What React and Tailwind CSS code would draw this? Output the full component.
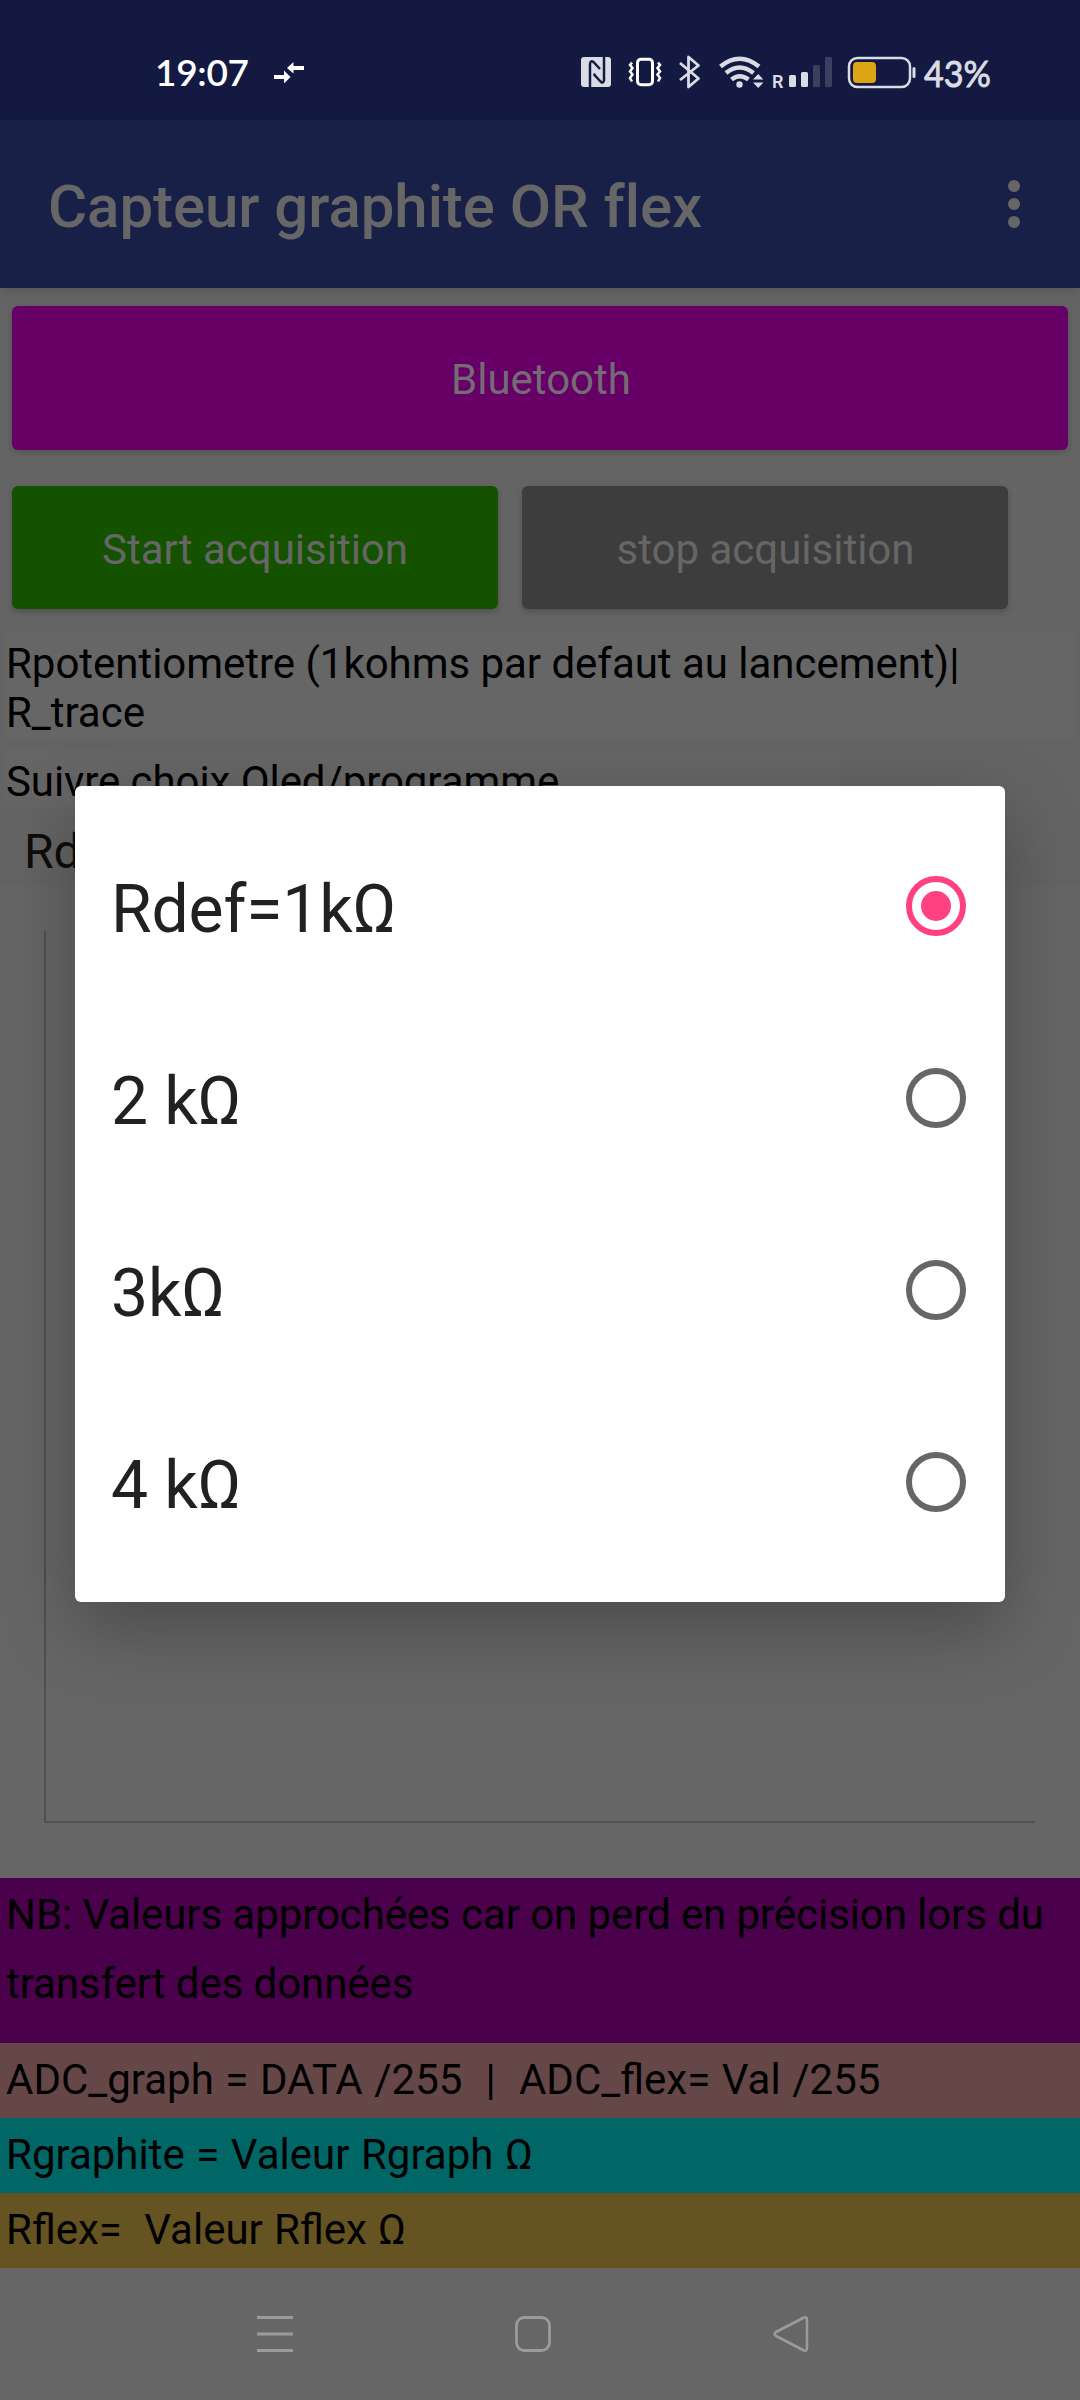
const options = ["Rdef=1kΩ", "2 kΩ", "3kΩ", "4 kΩ"];

function StatusBar() {
  return (
    <div className="flex h-[120px] shrink-0 items-start bg-[#131940]">
      <div className="flex h-[102px] w-full items-center pt-[42px]">
        <span className="ml-[155px] w-[112px] font-[Lato] text-[37px] leading-[60px] font-semibold tracking-[-0.3px] whitespace-nowrap text-white">19:07</span>
        <svg className="ml-[6px]" width="32" height="22" viewBox="0 0 32 22" fill="white">
          <path d="M1 14h10V9.500l6.500 6.500-6.500 6.500V18H1zM31 5v4H20.500v3.500L14 7l6.500-6V5z" />
        </svg>
        <svg className="ml-[276px]" width="432" height="60" viewBox="0 0 432 60" fill="#dadce4">
          <rect x="0" y="15" width="30" height="30" rx="3" />
          <path d="M9 45V22.500c0-3.500 2-4 4-2L19 27M13.500 31.500V33l6 6.500c1.800 1.800 3.500 1 3.500-1.500V15" fill="none" stroke="#131940" strokeWidth="2.500" />
          <rect x="56.500" y="17.300" width="15" height="25.500" rx="3.500" fill="none" stroke="white" strokeWidth="3" />
          <path d="M51 20.500l-2 2.500 2.500 3-2.500 3.500 2.500 3-2.500 3.500 2 3.500M77 20.500l2 2.500-2.500 3 2.500 3.500-2.500 3 2.500 3.500-2 3.500" fill="none" stroke="white" strokeWidth="2.500" />
          <path d="M99 21l18.500 15.500L107.500 45V15l10 8.500L99 38" fill="none" stroke="#dadce4" strokeWidth="2.800" strokeLinejoin="round" />
          <g fill="none" stroke="#dadce4" strokeWidth="4.500">
            <path d="M139.500 24.500q19-15.500 38.500 0" />
            <path d="M145 31q13.500-11 27.500 0" />
            <path d="M150.500 37.500q8-6.500 17 0" />
          </g>
          <circle cx="158.500" cy="42.500" r="3.200" />
          <path d="M172 37.500l5.200-5.500 5.200 5.500zM172 40.500l5.200 5.500 5.200-5.500z" />
          <text x="191" y="45.500" fontFamily="Roboto" fontSize="18" fontWeight="600">R</text>
          <rect x="208" y="33" width="7" height="12" rx="1.500" />
          <rect x="220" y="30" width="7" height="15" rx="1.500" />
          <rect x="232" y="23" width="7" height="22" rx="1.500" fill="#3b3f60" />
          <rect x="244" y="15" width="7" height="30" rx="1.500" fill="#3b3f60" />
          <rect x="268" y="16" width="61" height="29" rx="8.500" fill="none" stroke="#dadce4" strokeWidth="2.500" />
          <rect x="272" y="20" width="23" height="21" rx="4" fill="#dca516" />
          <rect x="331.500" y="25" width="3" height="11" rx="1.500" />
          <text x="343" y="44.500" fontFamily="Lato" fontSize="37" stroke="#dadce4" strokeWidth="0.9" textLength="67" lengthAdjust="spacingAndGlyphs">43%</text>
        </svg>
      </div>
    </div>
  );
}

function AppBar() {
  return (
    <header className="relative z-10 flex h-[168px] shrink-0 items-center justify-between bg-[#192048] pr-[60px] pl-12 shadow-[0_2px_10px_rgba(0,0,0,0.15)]">
      <h1 className="pt-[5px] text-[60px] leading-[70px] font-medium tracking-[-0.06px] text-[#666]">Capteur graphite OR flex</h1>
      <div className="flex flex-col gap-[6px]">
        <i className="size-3 rounded-full bg-[#666]" />
        <i className="size-3 rounded-full bg-[#666]" />
        <i className="size-3 rounded-full bg-[#666]" />
      </div>
    </header>
  );
}

function Radio({ checked }) {
  return checked ? (
    <span className="flex size-[60px] items-center justify-center rounded-full border-6 border-[#ff4081]">
      <i className="size-[30px] rounded-full bg-[#ff4081]" />
    </span>
  ) : (
    <span className="size-[60px] rounded-full border-6 border-[#666]" />
  );
}

function Dialog() {
  return (
    <div role="dialog" className="absolute top-[786px] left-[75px] z-20 flex h-[816px] w-[930px] flex-col rounded-[6px] bg-white py-6 shadow-[0_26px_75px_rgba(0,0,0,0.28)]">
      {options.map((label, i) => (
        <div key={label} className="flex h-48 items-center justify-between pr-[39px] pl-9">
          <span className="pt-2 text-[66px] leading-[78px] tracking-[-0.15px] text-[#212121]">{label}</span>
          <Radio checked={i === 0} />
        </div>
      ))}
    </div>
  );
}

function NavBar() {
  return (
    <nav className="flex h-[132px] shrink-0 items-center bg-[#666] pl-[255px]">
      <svg width="40" height="40" viewBox="0 0 40 40" stroke="#9b9b9b" strokeWidth="3" fill="none">
        <path d="M2 3.500h36M2 20h36M2 36.500h36" />
      </svg>
      <svg className="ml-[218px]" width="40" height="40" viewBox="0 0 40 40" stroke="#9b9b9b" strokeWidth="2.800" fill="none">
        <rect x="3.500" y="3.500" width="33" height="33" rx="8" />
      </svg>
      <svg className="ml-[219px]" width="40" height="40" viewBox="0 0 40 40" stroke="#9b9b9b" strokeWidth="2.600" fill="none">
        <path d="M31 4L4 18q-3 2 0 4l27 14q4 2 4-2V6q0-4-4-2z" strokeLinejoin="round" />
      </svg>
    </nav>
  );
}

export default function App() {
  return (
    <div className="relative flex h-[2400px] w-[1080px] flex-col overflow-hidden bg-[#666] font-[Roboto,sans-serif] text-[42px] leading-[49px] text-black">
      <StatusBar />
      <AppBar />
      <main className="flex h-[598px] shrink-0 flex-col bg-[#646464] pt-[18px]">
        <button className="mx-3 h-36 shrink-0 rounded-[6px] bg-[#660066] pt-[3px] pl-[2px] text-[#756b75] shadow-[0_2px_6px_rgba(0,0,0,0.2)]">Bluetooth</button>
        <div className="mt-9 flex shrink-0 gap-6 px-3">
          <button className="h-[123px] w-[486px] rounded-[6px] bg-[#145200] pt-1 text-[#666] shadow-[0_3px_6px_rgba(0,0,0,0.2)]">Start acquisition</button>
          <button className="h-[123px] w-[486px] rounded-[6px] bg-[#3d3d3d] pt-1 pl-[1px] text-[#666] shadow-[0_3px_6px_rgba(0,0,0,0.2)]">stop acquisition</button>
        </div>
        <p className="mx-[6px] mt-6 h-[106px] shrink-0 bg-[#666] pt-[6px] tracking-[-0.03px]">
          Rpotentiometre (1kohms par defaut au lancement)|<br />R_trace
        </p>
        <p className="mt-[11px] ml-[6px] h-[57px] w-[834px] shrink-0 bg-[#666] pt-[7px] tracking-[-0.08px]">Suivre choix Oled/programme</p>
        <div className="mt-[17px] w-[76px] overflow-hidden pl-6 text-[48px] leading-[56px] text-[#0d0d0d]">Rdef=1kΩ</div>
      </main>
      <section className="h-[992px] shrink-0 bg-[#666] pt-[45px] pl-[44px]">
        <div className="h-[892px] w-[991px] border-b-2 border-l-2 border-[#505050]" />
      </section>
      <p className="h-[165px] shrink-0 bg-[#4a004a] pt-[2px] pl-[6px] leading-[69px] tracking-[-0.08px] whitespace-pre">{"NB: Valeurs approchées car on perd en précision lors du\ntransfert des données"}</p>
      <p className="h-[75px] shrink-0 bg-[#664748] pt-3 pl-[6px] [word-spacing:1.15px] whitespace-pre">{"ADC_graph = DATA /255  |  ADC_flex= Val /255"}</p>
      <p className="h-[75px] shrink-0 bg-[#006666] pt-3 pl-[6px] [word-spacing:1.15px]">Rgraphite = Valeur Rgraph Ω</p>
      <p className="h-[75px] shrink-0 bg-[#665322] pt-3 pl-[6px] [word-spacing:0.8px] whitespace-pre">{"Rflex=  Valeur Rflex Ω"}</p>
      <NavBar />
      <Dialog />
    </div>
  );
}
